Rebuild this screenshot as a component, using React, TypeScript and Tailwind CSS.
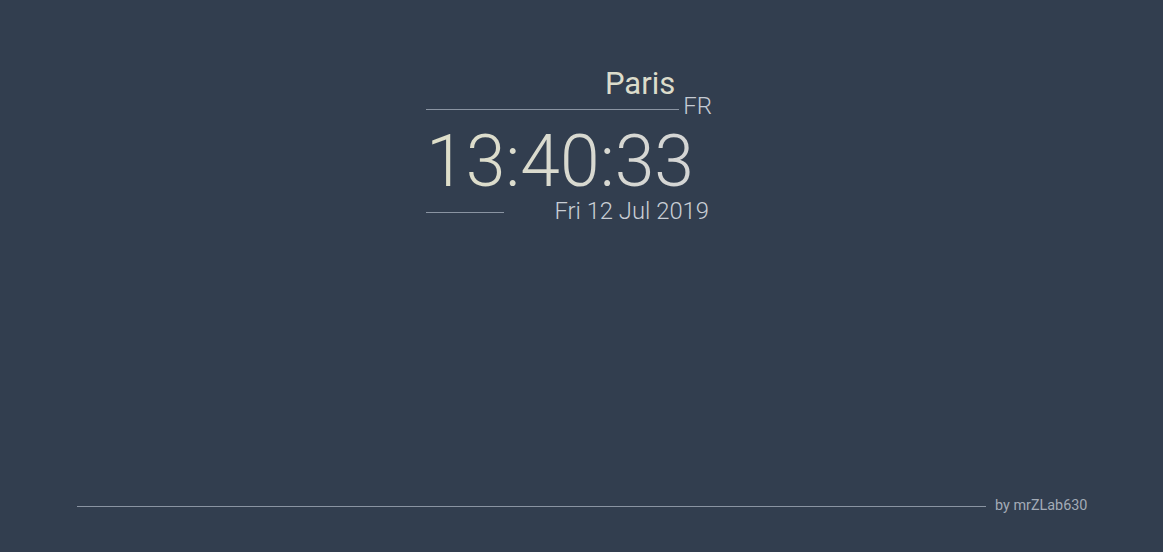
export default function App() {
  return (
    <main
      className="min-h-screen h-[552px] bg-[#323e4f] flex flex-col"
      style={{ fontFamily: "Roboto, 'Liberation Sans', sans-serif" }}
    >
      <div className="flex-1 pt-[66px]">
        <div className="ml-[426px] w-[286px] flex flex-col">
          <div className="flex items-end">
            <div className="w-[254px] border-b border-[#8a94a2] text-right pr-[4px] pb-[7px]">
              <span className="text-[31px] leading-[36px] text-[#dcdccb]">Paris</span>
            </div>
            <span className="ml-[4px] -mb-[10px] text-[24px] leading-[28px] font-light text-[#c5cbd3]">
              FR
            </span>
          </div>
          <div className="mt-[16px] text-[71.5px] leading-[72px] font-light bg-clip-text text-transparent bg-gradient-to-r from-[#dfdfc9] to-[#d3d4d6]">
            13:40:33
          </div>
          <div className="flex items-center justify-between">
            <div className="w-[78px] border-b border-[#8a94a2] mt-[2px]"></div>
            <span className="text-[23.8px] leading-[26px] font-light text-[#c9ced5] mr-[3px]">
              Fri 12 Jul 2019
            </span>
          </div>
        </div>
      </div>
      <div className="flex items-center pb-[35px] pl-[77px]">
        <div className="w-[909px] border-b border-[#8a94a2]"></div>
        <span className="ml-[9px] text-[14.4px] text-[#a3abb6]">by mrZLab630</span>
      </div>
    </main>
  );
}
